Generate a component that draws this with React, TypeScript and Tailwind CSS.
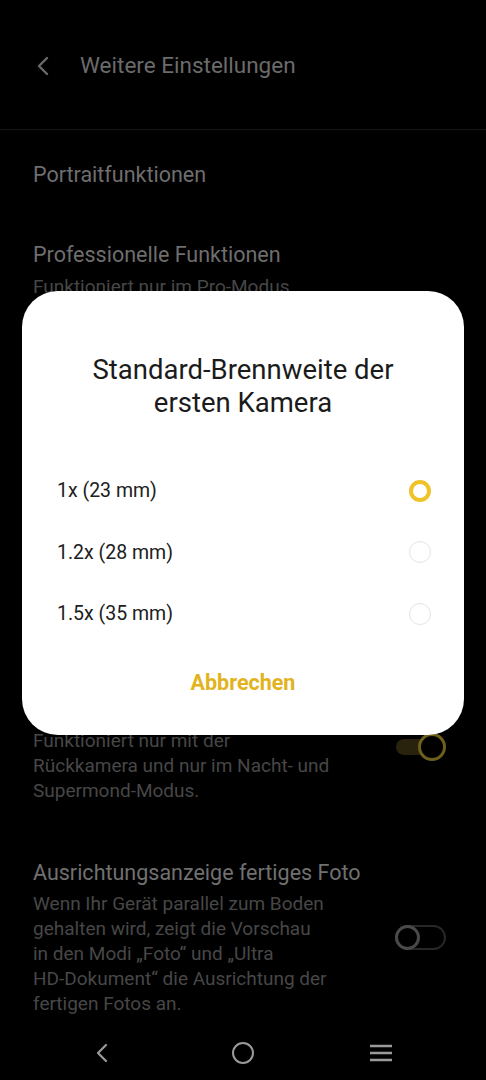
import { useState } from "react"

const FONT = { fontFamily: "Roboto, 'Noto Sans', sans-serif" }

type Option = { id: string; label: string }

const OPTIONS: Option[] = [
  { id: "1x", label: "1x (23 mm)" },
  { id: "1.2x", label: "1.2x (28 mm)" },
  { id: "1.5x", label: "1.5x (35 mm)" },
]

function Toggle({ on }: { on: boolean }) {
  if (on) {
    return (
      <div className="relative mr-[7px] h-[28px] w-[50px] shrink-0">
        <div className="absolute left-0 top-[6px] h-[16px] w-[40px] rounded-full bg-[#29230d]" />
        <div className="absolute right-0 top-0 h-[28px] w-[28px] rounded-full border-[3px] border-[#6d5f1c] bg-black" />
      </div>
    )
  }
  return (
    <div className="relative mr-[7px] h-[25px] w-[51px] shrink-0">
      <div className="absolute inset-0 rounded-full border-2 border-[#272727]" />
      <div className="absolute left-0 top-0 h-[25px] w-[25px] rounded-full border-[3px] border-[#4a4a4a] bg-black" />
    </div>
  )
}

function Radio({ checked }: { checked: boolean }) {
  return checked ? (
    <div className="h-[22px] w-[22px] rounded-full border-[4px] border-[#efc226]" />
  ) : (
    <div className="h-[22px] w-[22px] rounded-full border-[1.5px] border-[#e4e4e4]" />
  )
}

function FocalDialog() {
  const [selected, setSelected] = useState("1x")

  return (
    <div className="absolute left-[22px] top-[291px] w-[442px] rounded-[36px] bg-white pt-[62px] pb-[39px]">
      <h2 className="px-6 text-center text-[27.5px] leading-[33px] text-[#1b1b1b]">
        Standard-Brennweite der
        <br />
        ersten Kamera
      </h2>
      <div className="mt-[41px]">
        {OPTIONS.map((o) => (
          <div
            key={o.id}
            onClick={() => setSelected(o.id)}
            className="flex h-[61.5px] items-center justify-between pl-[35px] pr-[33px]"
          >
            <span className="text-[19.5px] text-[#202020]">{o.label}</span>
            <Radio checked={selected === o.id} />
          </div>
        ))}
      </div>
      <div className="mt-[25px] text-center text-[21.5px] font-bold leading-[26px] text-[#e2b320]">
        Abbrechen
      </div>
    </div>
  )
}

export default function App() {
  return (
    <div
      className="relative h-[1080px] w-[486px] overflow-hidden bg-black"
      style={FONT}
    >
      {/* header */}
      <div className="flex h-[130px] items-center gap-[29px] border-b border-[#141414] pl-[35px] pt-[2px]">
        <svg width="16" height="20" viewBox="0 0 16 20" fill="none">
          <path
            d="M12 2 L4 10 L12 18"
            stroke="#6a6a6a"
            strokeWidth="2.4"
            strokeLinecap="round"
            strokeLinejoin="round"
          />
        </svg>
        <span className="text-[22.5px] text-[#6b6b6b]">Weitere Einstellungen</span>
      </div>

      <div className="px-[33px]">
        <div className="pt-[31px] text-[21.5px] leading-[28px] text-[#6e6e6e]">
          Portraitfunktionen
        </div>

        <div className="mt-[52px]">
          <div className="text-[21.5px] leading-[28px] text-[#6e6e6e]">
            Professionelle Funktionen
          </div>
          <div className="mt-[5px] text-[19px] leading-[25px] text-[#474747]">
            Funktioniert nur im Pro-Modus.
          </div>
        </div>

        {/* rows hidden under the dialog */}
        <div className="h-[429px]" />

        <div className="flex items-start justify-between">
          <div className="whitespace-nowrap text-[19px] leading-[25px] text-[#474747]">
            Funktioniert nur mit der
            <br />
            Rückkamera und nur im Nacht- und
            <br />
            Supermond-Modus.
          </div>
          <div className="mt-[5px]">
            <Toggle on />
          </div>
        </div>

        <div className="mt-[56px] flex items-center justify-between">
          <div>
            <div className="text-[21.5px] leading-[28px] text-[#707070]">
              Ausrichtungsanzeige fertiges Foto
            </div>
            <div className="mt-[4px] whitespace-nowrap text-[19px] leading-[25px] text-[#474747]">
              Wenn Ihr Gerät parallel zum Boden
              <br />
              gehalten wird, zeigt die Vorschau
              <br />
              in den Modi „Foto“ und „Ultra
              <br />
              HD-Dokument“ die Ausrichtung der
              <br />
              fertigen Fotos an.
            </div>
          </div>
          <Toggle on={false} />
        </div>
      </div>

      {/* system nav bar */}
      <div className="absolute bottom-0 left-0 flex h-[56px] w-full items-center justify-between pl-[93px] pr-[93px] pt-[2px]">
        <svg width="18" height="22" viewBox="0 0 18 22" fill="none">
          <path
            d="M13 3 L5 11 L13 19"
            stroke="#9a9a9a"
            strokeWidth="2.2"
            strokeLinecap="round"
            strokeLinejoin="round"
          />
        </svg>
        <div className="ml-[6px] h-[22px] w-[22px] rounded-full border-[2.5px] border-[#9a9a9a]" />
        <svg width="24" height="20" viewBox="0 0 24 20" fill="none">
          <path
            d="M1 3 H23 M1 10 H23 M1 17 H23"
            stroke="#9a9a9a"
            strokeWidth="2.4"
          />
        </svg>
      </div>

      <FocalDialog />
    </div>
  )
}
